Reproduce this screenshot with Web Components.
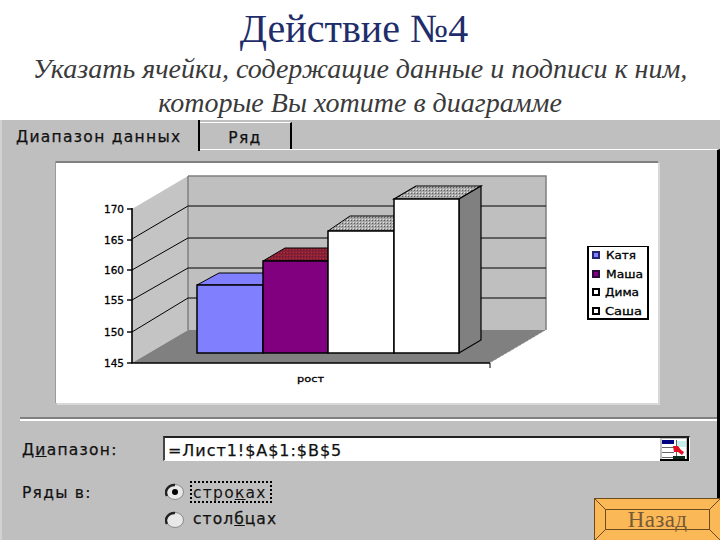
<!DOCTYPE html>
<html lang="ru"><head><meta charset="utf-8"><title>Действие №4</title>
<style>
html,body{margin:0;padding:0;background:#fff}
body{width:720px;height:540px;overflow:hidden;position:relative;font-family:"Liberation Serif",serif}
</style></head><body>
<slide-heading title-text="Действие №4">Указать ячейки, содержащие данные и подписи к ним,<br>которые Вы хотите в диаграмме</slide-heading>
<chart-dialog>
  <tab-bar slot="tabs"><tab-item active>Диапазон данных</tab-item><tab-item>Ряд</tab-item></tab-bar>
  <chart-preview slot="preview"></chart-preview>
  <range-field slot="range" value="=Лист1!$A$1:$B$5"></range-field>
  <series-radios slot="series"></series-radios>
</chart-dialog>
<nav-button>Назад</nav-button>
<script>
function def(name, css, html, init){
  customElements.define(name, class extends HTMLElement{
    constructor(){super();const r=this.attachShadow({mode:'open'});r.innerHTML='<style>'+css+'</style>'+(typeof html==='function'?html(this):html);}
    connectedCallback(){ if(init) init(this); }
  });
}
const UI='"DejaVu Sans","Liberation Sans",sans-serif';
def('slide-heading',
 `:host{display:block;height:120px;text-align:center;font-family:"Liberation Serif",serif;overflow:hidden}
  h1{margin:0;padding-top:6px;font-weight:400;font-size:40px;line-height:46px;color:#1f2d6b;transform:translateX(-6px)}
  p{margin:0;font-style:italic;font-size:28px;line-height:34px;color:#3a3a3a}`,
 `<h1></h1><p><slot></slot></p>`,
 el=>{el.shadowRoot.querySelector('h1').textContent=el.getAttribute('title-text')});
def('chart-dialog',
 `:host{display:block;height:420px;background:#bfbfbf;border-left:2px solid #d2d2d2;box-sizing:border-box;font-family:${UI};color:#111}
  .pane{height:390px;box-sizing:border-box;border-top:1px solid #fff;border-right:3px solid #000;margin-top:-1px;display:flex;flex-direction:column;padding-top:11px}
  .sep{margin:14px 0 15px 18px;border-top:2px solid #808080;border-bottom:2px solid #fff;height:0}
  .form{display:flex;flex-direction:column;gap:20px}`,
 `<slot name="tabs"></slot><div class="pane"><slot name="preview"></slot><div class="sep"></div><div class="form"><slot name="range"></slot><slot name="series"></slot></div></div>`);
def('tab-bar',`:host{display:flex;height:30px;position:relative;z-index:1}`,`<slot></slot>`);
def('tab-item',
 `:host{display:block;box-sizing:border-box;height:30px;font-size:15.5px;line-height:30px;letter-spacing:1.3px;-webkit-text-stroke:.25px #111;white-space:nowrap;color:#111}
  :host([active]){width:198px;padding:2px 0 0 14px;border-right:2px solid #000;background:#bfbfbf;height:31px}
  :host(:not([active])){width:92px;margin-top:2px;height:27px;border-top:1px solid #fff;border-right:2px solid #000;text-align:center;line-height:28px;padding-top:1px}`,
 `<slot></slot>`);
def('chart-preview',
 `:host{display:block;width:603px;height:242px;margin-left:53px;background:#fff;box-shadow:2px 2px 0 #d8d8d8}
  svg{display:block}
  text{font-family:${UI};fill:#000}`,
 (()=>{
  const grid=[[205,238],[237,269],[267,299],[297,331]];
  const ticks=[[170,208],[165,239],[160,269],[155,299],[150,331],[145,362]];
  const legend=[['Катя',254,'#8080ff','#26246e'],['Маша',273,'#800080','#2c0a3c'],['Дима',291,'#fff','#000'],['Саша',310,'#fff','#000']];
  return `<svg width="603" height="242" viewBox="55 160 603 242" shape-rendering="crispEdges">
  <defs>
   <pattern id="dg" width="3" height="3" patternUnits="userSpaceOnUse"><rect width="3" height="3" fill="#a8a8a8"/><rect width="1" height="1" fill="#5e5e5e"/><rect x="2" y="2" width="1" height="1" fill="#e4e4e4"/></pattern>
   <pattern id="dr" width="3" height="3" patternUnits="userSpaceOnUse"><rect width="3" height="3" fill="#8c2034"/><rect width="1" height="1" fill="#5c1a40"/><rect x="2" y="2" width="1" height="1" fill="#a83030"/></pattern>
  </defs>
  <rect x="55" y="160" width="603" height="2" fill="#808080"/><rect x="55" y="160" width="1" height="242" fill="#9a9a9a"/>
  <g shape-rendering="auto">
  <polygon points="188,175 546,175 546,329 188,329" fill="#bfbfbf"/>
  <polygon points="132,208 188,175 188,329 132,362" fill="#c4c4c4"/>
  <polygon points="132,362 188,329 546,329 490,362" fill="#808080"/>
  <path d="M188 175V329M188 175H546V329" stroke="#808080" stroke-width="1.5" fill="none"/>
  ${grid.map(([b,l])=>`<path d="M132 ${l}L188 ${b}H546" stroke="#000" stroke-width="1" fill="none"/>`).join('')}
  <path d="M132 207V362H490" stroke="#000" stroke-width="1.6" fill="none"/>
  <path d="M490 362L546 329" stroke="#fff" stroke-dasharray="2 2" stroke-width="1" opacity=".6"/>
  <path d="M490 362v5" stroke="#000"/>
  ${ticks.map(([,y])=>`<path d="M127 ${y}h5" stroke="#000" stroke-width="1.4"/>`).join('')}
  <polygon points="197,284 219,272 285,272 263,284" fill="#8080ff" stroke="#000" stroke-width="1"/>
  <polygon points="263,260 285,247 350,247 328,260" fill="url(#dr)" stroke="#000" stroke-width="1"/>
  <polygon points="328,230 350,215 416,215 394,230" fill="url(#dg)" stroke="#000" stroke-width="1"/>
  <polygon points="394,198 416,185 481,185 459,198" fill="url(#dg)" stroke="#000" stroke-width="1.2"/>
  <polygon points="459,198 481,185 481,339 459,352" fill="#808080" stroke="#000" stroke-width="1.2"/>
  <rect x="197" y="284" width="66" height="68" fill="#8080ff" stroke="#000" stroke-width="1.5"/>
  <rect x="263" y="260" width="65" height="92" fill="#800080" stroke="#000" stroke-width="1.5"/>
  <rect x="328" y="230" width="66" height="122" fill="#fff" stroke="#000" stroke-width="1.5"/>
  <rect x="394" y="198" width="65" height="154" fill="#fff" stroke="#000" stroke-width="1.5"/>
  </g>
  ${ticks.map(([t,y])=>`<text x="104" y="${y+4}" font-size="10.5" textLength="20" lengthAdjust="spacingAndGlyphs" stroke="#000" stroke-width=".3">${t}</text>`).join('')}
  <text x="297" y="381" font-size="9.5" textLength="27" lengthAdjust="spacingAndGlyphs" stroke="#000" stroke-width=".3">рост</text>
  <rect x="588" y="245.5" width="60" height="72.5" fill="#fff" stroke="#000" stroke-width="1.6"/>
  ${legend.map(([n,y,c,s],i)=>`<rect x="593" y="${y-3}" width="6" height="6" fill="${c}" stroke="${s}" stroke-width="1.4"/><text x="${i<2?606:605}" y="${y+4}" font-size="10.5" textLength="${[30,37,34,37][i]}" lengthAdjust="spacingAndGlyphs" stroke="#000" stroke-width=".3">${n}</text>`).join('')}
  </svg>`;})());
def('range-field',
 `:host{display:flex;align-items:center;height:25px;font-size:15.5px;letter-spacing:1.25px;-webkit-text-stroke:.25px #111;color:#111}
  label{width:141px;margin-left:20px;padding-top:3px}
  u{text-decoration:underline}
  .box{width:527px;height:25px;box-sizing:border-box;background:#fff;border-top:2px solid #222;border-left:2px solid #444;border-right:1px solid #fff;border-bottom:1px solid #fff;display:flex;align-items:center;justify-content:space-between;font-size:16px;letter-spacing:.95px;padding-left:3px}
  .val{padding-top:3px}
  svg{display:block;margin-right:0}`,
 el=>`<label>Д<u>и</u>апазон:</label><div class="box"><span class="val"></span>
 <svg width="29" height="23" viewBox="0 0 29 23" shape-rendering="crispEdges">
  <rect width="29" height="23" fill="#bfbfbf"/>
  <rect x="2" y="1" width="24" height="20" fill="#fff"/>
  <rect x="2" y="2" width="12" height="4" fill="#000080"/>
  <path d="M2 9h12M2 14h12M2 19h12M16 2v18" stroke="#666" stroke-width="1" fill="none"/>
  <rect x="17" y="3" width="9" height="6" fill="#c6f0ee"/>
  <polygon points="13,8 18,8 21,12 24,14 22,17 18,14 14,14" fill="#e01020" shape-rendering="auto"/>
  <rect x="13" y="18" width="12" height="3" fill="#0a2a1a"/>
  <rect x="27" y="0" width="2" height="23" fill="#000"/>
  <rect x="0" y="21" width="29" height="2" fill="#000"/>
 </svg></div>`,
 el=>{el.shadowRoot.querySelector('.val').textContent=el.getAttribute('value')});
def('series-radios',
 `:host{display:flex;font-size:15.5px;letter-spacing:1.25px;-webkit-text-stroke:.2px #111;color:#111}
  .lbl{width:141px;margin-left:20px;padding-top:3px}
  .opts{display:flex;flex-direction:column;gap:6px;margin-left:2px}
  .opt{display:flex;align-items:center;gap:5px;height:22px}
  i{display:block;width:20px;height:18px;flex:none}
  .t{line-height:21px;height:22px;box-sizing:border-box;-webkit-text-stroke:0}
  .focus{border:2px dotted #000;line-height:20px;padding:0 0 0 1px;width:82px}
  .last{-webkit-text-stroke:.25px #111;margin-left:3px;letter-spacing:1.05px}
  u{text-decoration:underline}`,
 `<div class="lbl">Ряды в:</div><div class="opts">
  <div class="opt"><i><svg width="20" height="18"><ellipse cx="10" cy="9" rx="8.5" ry="7.5" fill="#e8e8e8" stroke="#8a8a8a"/><path d="M2 13A8.5 7.5 0 0 1 10 2" stroke="#222" stroke-width="2.4" fill="none"/><circle cx="10" cy="9" r="3" fill="#000"/></svg></i><span class="t focus">стро<u>к</u>ах</span></div>
  <div class="opt"><i><svg width="20" height="18"><ellipse cx="10" cy="9" rx="8.5" ry="7.5" fill="#e8e8e8" stroke="#8a8a8a"/><path d="M2 13A8.5 7.5 0 0 1 10 2" stroke="#222" stroke-width="2.4" fill="none"/></svg></i><span class="t last">стол<u>б</u>цах</span></div>
 </div>`);
def('nav-button',
 `:host{position:absolute;left:594px;top:498px;width:126px;height:42px;box-sizing:border-box;background:#fbb856;border-top:1px solid #6b4a1e;border-left:1px solid #6b4a1e;display:flex;align-items:center;justify-content:center;padding:10px}
  svg{position:absolute;inset:0}
  .in{position:relative;flex:1;height:21px;border:1px solid #6b4a1e;margin:0;text-align:center;font:23px/20px "Liberation Serif",serif;letter-spacing:.3px;color:#765a36;box-sizing:border-box}`,
 `<svg width="125" height="41"><path d="M0 0L10 10M125 0L115 10M0 41L10 31M125 41L115 31" stroke="#6b4a1e"/></svg><div class="in"><slot></slot></div>`);
</script>
</body></html>
